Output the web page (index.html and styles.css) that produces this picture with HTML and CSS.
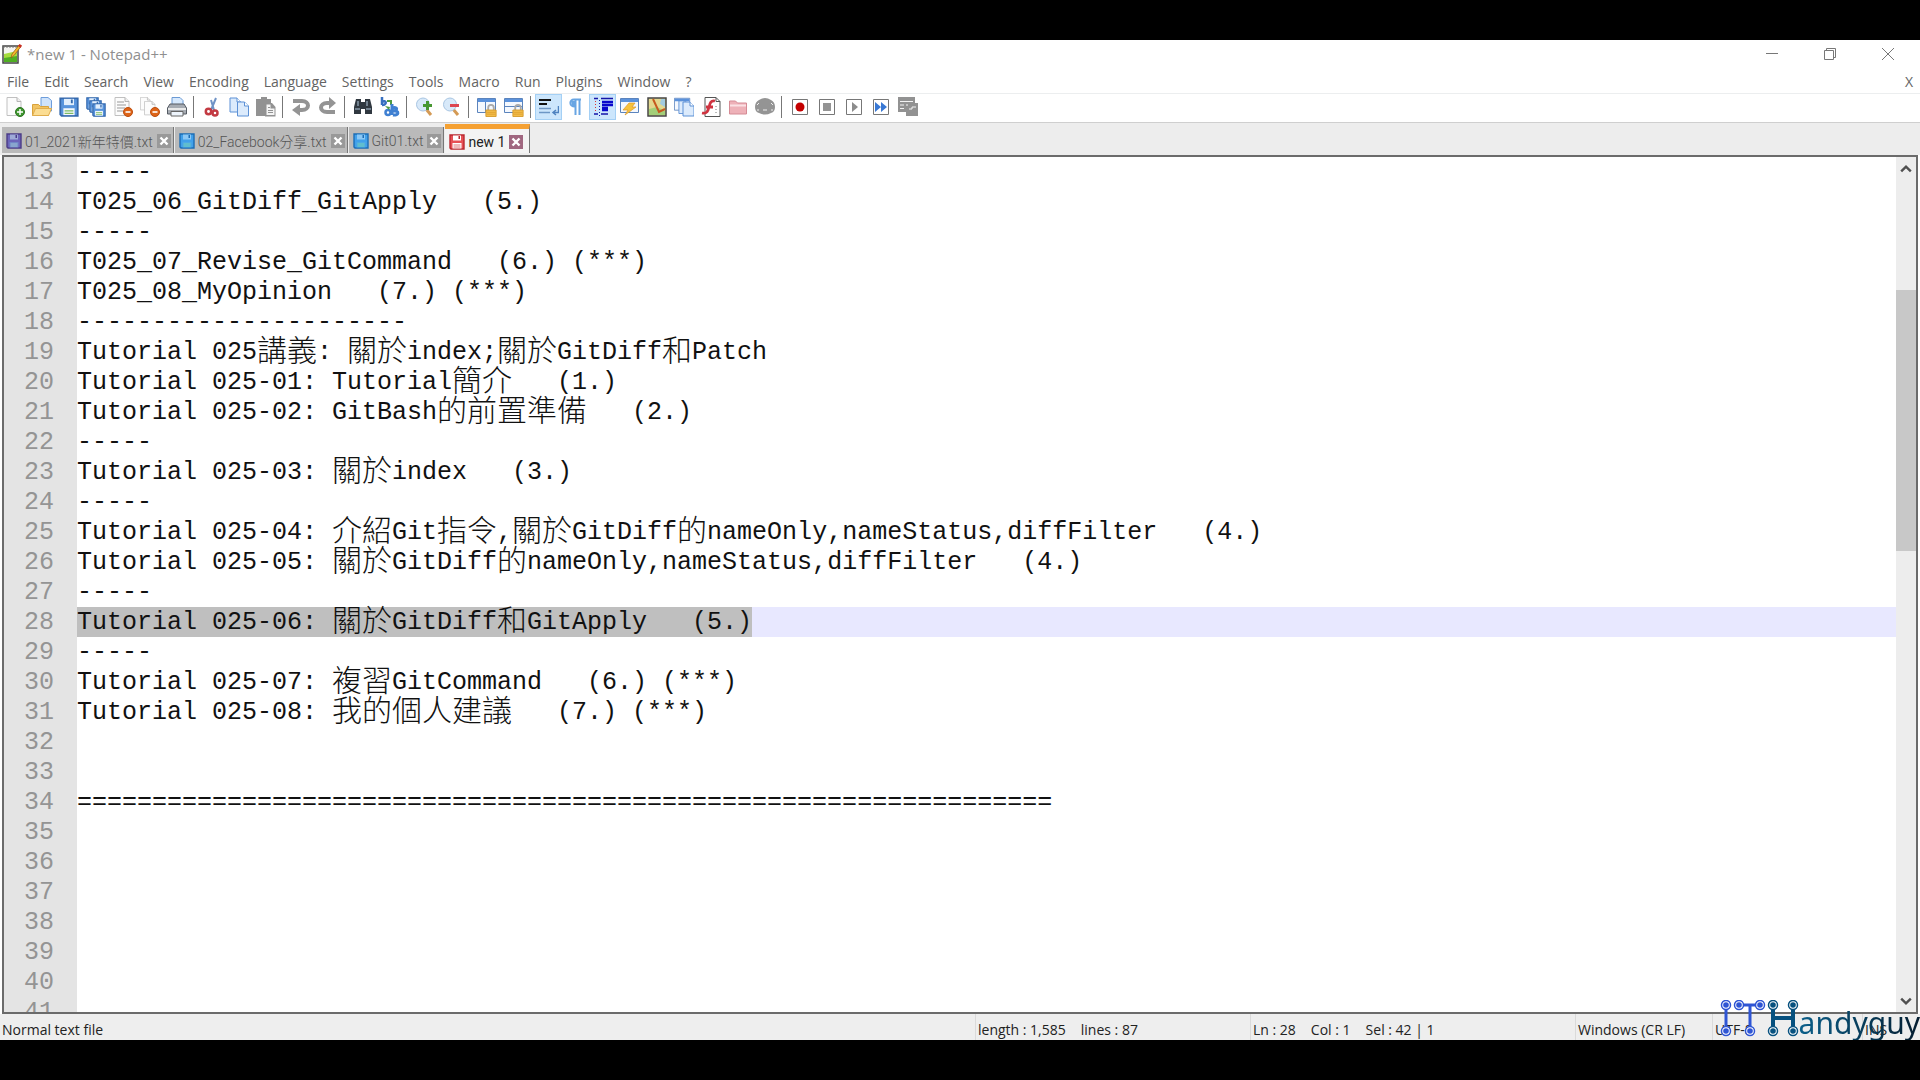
FILE: index.html
```html
<!DOCTYPE html>
<html lang="en">
<head>
<meta charset="UTF-8">
<meta name="viewport" content="width=device-width, initial-scale=1.0">
<title>*new 1 - Notepad++</title>
<link rel="stylesheet" href="styles.css">
</head>
<body>
<!-- shapes used more than once -->
<svg class="defs" aria-hidden="true">
  <symbol id="disk" viewBox="0 0 16 16">
    <path d="M1 1h14v14H2l-1-1z" fill="var(--disk)" stroke="var(--edge)" stroke-width="1.4"/>
    <path d="M4 1.500h8v5H4z" fill="var(--label)"/>
    <path d="M9.500 2h1.500v3H9.500z" fill="var(--edge)"/>
    <path d="M3.500 9h9v5.500h-9z" fill="var(--paper)"/>
    <path d="M4.500 11h7M4.500 13h7" stroke="var(--lines)"/>
  </symbol>
  <symbol id="page" viewBox="0 0 20 20">
    <path d="M2 .5h10l4 4v14H2z" fill="#fcfcfc" stroke="#c0c0c0"/>
    <path d="M12 .5v4h4" fill="#eee" stroke="#b4b4b4"/>
  </symbol>
  <symbol id="bluepage" viewBox="0 0 20 20">
    <path d="M1 1h7l4 4v10H1z" fill="#dcebfc" stroke="#5d91d6"/>
    <path d="M8 1v4h4" fill="#fff" stroke="#5d91d6"/>
  </symbol>
  <symbol id="minus" viewBox="0 0 10 10">
    <circle cx="5" cy="5" r="4.500" fill="#dd6418" stroke="#bd4c0c"/>
    <path d="M2.500 5h5" stroke="#fff" stroke-width="1.600"/>
  </symbol>
  <symbol id="lock" viewBox="0 0 12 14">
    <path d="M3 7V4a3 3 0 0 1 6 0v3" fill="none" stroke="#a9a9a9" stroke-width="2"/>
    <path d="M.5 6.500h11v7H.5z" fill="#f3bd49" stroke="#d69a2b"/>
    <path d="M1 9h10M1 11h10" stroke="#e0a333"/>
  </symbol>
  <symbol id="win" viewBox="0 0 20 20">
    <path d="M.5 1.500h18v14H.5z" fill="#f4f8fe" stroke="#5b84bd"/>
    <path d="M1 2h17v3H1z" fill="#5b92dc"/>
  </symbol>
  <symbol id="cross" viewBox="0 0 14 14">
    <path d="M3.500 3.500l7 7M10.500 3.500l-7 7" stroke="#fff" stroke-width="2.400"/>
  </symbol>
</svg>

<div class="window">
  <header class="titlebar">
    <svg class="app-icon" viewBox="0 0 20 20">
      <path d="M1 2h15v17H1z" fill="#f4f4f0" stroke="#444" stroke-width="1.500"/>
      <path d="M2 10l13-3v11H2z" fill="#a5dc3c"/>
      <path d="M2 14l13-2v6H2z" fill="#4faf22"/>
      <path d="M2 1v3M5 1v3M8 1v3M11 1v3M14 1v3" stroke="#777"/>
      <path d="M9 14l1-4 7-9 2 1.500-7 9z" fill="#f5b52b" stroke="#8d5a18" stroke-width=".7"/>
      <path d="M16 2l1.500-2L20 1.500 18.500 4z" fill="#c82e22"/>
    </svg>
    <h1>*new 1 - Notepad++</h1>
    <div class="controls">
      <button aria-label="Minimize"><svg viewBox="0 0 12 12"><path d="M0 5.500h12"/></svg></button>
      <button aria-label="Restore"><svg viewBox="0 0 12 12"><path d="M.5 2.500h9v9h-9zM2.500 2.500v-2h9v9h-2"/></svg></button>
      <button aria-label="Close"><svg viewBox="0 0 12 12"><path d="M0 0l12 12M12 0L0 12"/></svg></button>
    </div>
  </header>

  <nav class="menu">
    <button>File</button>
    <button>Edit</button>
    <button>Search</button>
    <button>View</button>
    <button>Encoding</button>
    <button>Language</button>
    <button>Settings</button>
    <button>Tools</button>
    <button>Macro</button>
    <button>Run</button>
    <button>Plugins</button>
    <button>Window</button>
    <button>?</button>
    <button class="close-doc">X</button>
  </nav>

  <div class="toolbar">
    <button aria-label="New"><svg viewBox="0 0 20 20"><use href="#page" width="20" height="20"/><circle cx="15" cy="15" r="4.500" fill="#3f962f" stroke="#2b7420"/><path d="M15 12v6M12 15h6" stroke="#fff" stroke-width="1.500"/></svg></button>
    <button aria-label="Open"><svg viewBox="0 0 20 20"><path d="M9 .5h7l3.500 3V14H9z" fill="#cfe3fb" stroke="#6d9ddb"/><path d="M.5 18.500v-11h6l2 2h8v9z" fill="#f2c463" stroke="#d9a23c"/><path d="M.5 18.500l3-7h16l-3 7z" fill="#fbdd93" stroke="#e0ad4c"/></svg></button>
    <button aria-label="Save"><svg class="blue" viewBox="0 0 20 20"><use href="#disk" width="20" height="20"/></svg></button>
    <button aria-label="Save all"><svg class="blue" viewBox="0 0 20 20"><use href="#disk" x="0" y="0" width="13" height="13"/><use href="#disk" x="3" y="3" width="13" height="13"/><use href="#disk" x="6" y="6" width="14" height="14"/></svg></button>
    <button aria-label="Close file"><svg viewBox="0 0 20 20"><use href="#page" width="20" height="20"/><path d="M4 5h7M4 8h9M4 11h8M4 14h6" stroke="#999"/><use href="#minus" x="10" y="10" width="10" height="10"/></svg></button>
    <button aria-label="Close all"><svg viewBox="0 0 20 20"><use href="#page" x="-1" width="14" height="14"/><use href="#page" x="3" y="4" width="15" height="15"/><use href="#minus" x="10" y="10" width="10" height="10"/></svg></button>
    <button aria-label="Print"><svg viewBox="0 0 20 20"><path d="M5 .5h8l3 3V9H5z" fill="#d7e9fd" stroke="#6b9ad4"/><path d="M3 7h14l2.500 4v6H.5v-6z" fill="#a6abb2" stroke="#555b63"/><path d="M1 12h18" stroke="#e9e9e9" stroke-width="2"/><path d="M4 14.500h12v4.500H4z" fill="#eef5fd" stroke="#666"/></svg></button>
    <span class="sep"></span>
    <button aria-label="Cut"><svg viewBox="0 0 20 20"><path d="M14 1L9 13M9 3l3 10" stroke="#6f93c6" stroke-width="2"/><g fill="none" stroke="#c33a42" stroke-width="2.500"><circle cx="6.500" cy="14.500" r="2.700"/><circle cx="13" cy="16" r="2.500"/></g></svg></button>
    <button aria-label="Copy"><svg viewBox="0 0 20 20"><use href="#bluepage" width="20" height="20"/><use href="#bluepage" x="7.500" y="4" width="20" height="20"/></svg></button>
    <button aria-label="Paste"><svg viewBox="0 0 20 20"><path d="M0 2h5V0h6v2h4v4H9v13H0z" fill="#929292"/><path d="M9 6h7l3.500 4v9.500H9z" fill="#929292"/><path d="M10.500 7.500h4v4h4V18h-8z" fill="#f4f4f4"/><path d="M12 10.500h2M12 13.500h5M12 15.500h5" stroke="#929292"/></svg></button>
    <span class="sep"></span>
    <button aria-label="Undo"><svg viewBox="0 0 20 20"><path d="M2 4h9c8 0 8 9 0 9H8" fill="none" stroke="#949494" stroke-width="4"/><path d="M1 13l8-6v12z" fill="#949494"/></svg></button>
    <button aria-label="Redo"><svg viewBox="0 0 20 20"><path d="M12 6H9C1 6 1 15 9 15h8" fill="none" stroke="#949494" stroke-width="4"/><path d="M18 6l-7-6v12z" fill="#949494"/></svg></button>
    <span class="sep"></span>
    <button aria-label="Find"><svg viewBox="0 0 20 20"><path d="M3 2h5v3h4V2h5l2 8v7h-7v-5H8v5H1v-7z" fill="#303840"/><path d="M5 4v5M14 4v5M2 12h5M13 12h5" stroke="#8798a8" stroke-width="1.500"/></svg></button>
    <button aria-label="Replace"><svg viewBox="0 0 20 20"><path d="M2 0v8M2 5c4-3 6 3 0 3" fill="none" stroke="#376fc0" stroke-width="2.500"/><path d="M7 4h4v4" fill="none" stroke="#4e9b43" stroke-width="2"/><path d="M12 7v11M12 11c6-2 6 3 1 3 7-1 6 5 0 4" fill="none" stroke="#3f80d2" stroke-width="3"/><circle cx="8" cy="15.500" r="2.500" fill="none" stroke="#3f80d2" stroke-width="2.500"/><path d="M5 9l5 1-1 3z" fill="#4e9b43"/></svg></button>
    <span class="sep"></span>
    <button aria-label="Zoom in"><svg viewBox="0 0 20 20"><path d="M11 12l5 6" stroke="#d49a55" stroke-width="3"/><circle cx="8" cy="7.500" r="6.500" fill="#d8e9f9" stroke="#a8c5e2"/><path d="M12.500 4v9M8 8.500h9" stroke="#479832" stroke-width="3"/></svg></button>
    <button aria-label="Zoom out"><svg viewBox="0 0 20 20"><path d="M11 12l5 6" stroke="#d49a55" stroke-width="3"/><circle cx="8" cy="7.500" r="6.500" fill="#d8e9f9" stroke="#a8c5e2"/><path d="M8 8.500h9" stroke="#dc4650" stroke-width="3"/></svg></button>
    <span class="sep"></span>
    <button aria-label="Sync vertical"><svg viewBox="0 0 20 20"><use href="#win" width="20" height="20"/><path d="M8.500 5v10" stroke="#5b84bd"/><use href="#lock" x="8" y="7" width="12" height="13"/></svg></button>
    <button aria-label="Sync horizontal"><svg viewBox="0 0 20 20"><use href="#win" width="20" height="20"/><path d="M1 9.500h17" stroke="#5b84bd"/><use href="#lock" x="8" y="7" width="12" height="13"/></svg></button>
    <span class="sep"></span>
    <button class="on" aria-label="Word wrap"><svg viewBox="0 0 20 20"><path d="M0 3h12M0 7h8" stroke="#111" stroke-width="2"/><path d="M0 11.500h12M0 15.500h11" stroke="#6d97c6" stroke-width="1.500"/><path d="M19.500 9v6.500H14M17 13l-3 2.500 3 2.500" fill="none" stroke="#4e82c0" stroke-width="1.500"/></svg></button>
    <button aria-label="Show all characters"><svg viewBox="0 0 20 20"><path d="M15 2.500H8c-5 0-5 7 1 7M9.500 3v15M13.500 3v15" fill="none" stroke="#68a5e3" stroke-width="2"/><path d="M5 4h5v5H6z" fill="#68a5e3"/></svg></button>
    <button class="on" aria-label="Indent guide"><svg viewBox="0 0 20 20"><path d="M1 1.500h4M8 1.500h12M8 17h7M1 17h4" stroke="#1515a8" stroke-width="1.500"/><path d="M9 5h11M9 8h11M9 11h6M9 13h6" stroke="#0808cc" stroke-width="2.500"/><path d="M2.500 4v12" stroke="#d33" stroke-dasharray="1 2"/><path d="M6.500 3v17" stroke="#1515a8" stroke-dasharray="1 2"/></svg></button>
    <button aria-label="User language"><svg viewBox="0 0 20 20"><use href="#win" width="20" height="20"/><path d="M9 6h6l-3 4h4L5 18l3-5H3z" fill="#f7c23c" stroke="#dd9a2a" stroke-width=".7"/></svg></button>
    <button aria-label="Document map"><svg viewBox="0 0 20 20"><path d="M1 1h18v18H1z" fill="#e3d88f" stroke="#464646" stroke-width="1.500"/><path d="M2 12l8-2 8 4v4H2z" fill="#a4cf79"/><path d="M14 2h4v8l-5-3z" fill="#a2cbe0"/><path d="M6 2l6 13 6-3" fill="none" stroke="#c6591f" stroke-width="2"/></svg></button>
    <button aria-label="Document list"><svg viewBox="0 0 20 20"><use href="#win" width="17" height="17"/><use href="#bluepage" x="4" y="3" width="18" height="18"/><use href="#bluepage" x="8" y="4" width="20" height="20"/></svg></button>
    <button aria-label="Function list"><svg viewBox="0 0 20 20"><path d="M4 .5h11l4 4v15H4z" fill="#fff" stroke="#555"/><path d="M15 .5v4h4" fill="none" stroke="#555"/><path d="M14 4c-4-1-5 2-6 6s-2 7-7 6M5 10h7" fill="none" stroke="#cf3340" stroke-width="2.800"/><path d="M15 9v8" stroke="#777" stroke-dasharray="1 2"/></svg></button>
    <button aria-label="Folder as workspace"><svg viewBox="0 0 20 20"><path d="M1.500 17V4h6l2 2h9v11z" fill="#eeb1b8" stroke="#d58b95"/><path d="M2 8.500h16" stroke="#fbe1e4" stroke-width="2"/></svg></button>
    <button aria-label="Monitoring"><svg viewBox="0 0 20 20"><path d="M4 3q6-4 12 0 4 2 4 7t-4 6q-6 3-12 0-4-1-4-6t4-7z" fill="#949494"/><path d="M2 8l2-2M16 6l2 2M3 12v2M17 12v2M8 13h4" stroke="#eee"/></svg></button>
    <span class="sep"></span>
    <button aria-label="Record macro"><svg viewBox="0 0 20 20"><path class="frame" d="M2.500 2.500h15v15h-15z"/><circle cx="10" cy="10" r="4.500" fill="#c40000"/></svg></button>
    <button aria-label="Stop macro"><svg viewBox="0 0 20 20"><path class="frame" d="M2.500 2.500h15v15h-15z"/><path d="M6 6h8v8H6z" fill="#949494"/></svg></button>
    <button aria-label="Play macro"><svg viewBox="0 0 20 20"><path class="frame" d="M2.500 2.500h15v15h-15z"/><path d="M8 5l6 5-6 5z" fill="#8c8c8c"/></svg></button>
    <button aria-label="Play macro many times"><svg viewBox="0 0 20 20"><path class="frame" d="M2.500 2.500h15v15h-15z"/><path d="M4 5l6 5-6 5zM10 5l6 5-6 5z" fill="#3978d4"/></svg></button>
    <button aria-label="Save macro"><svg viewBox="0 0 20 20"><path d="M0 0h17v6h3v13H8v-4H0z" fill="#929292"/><path d="M2 4.500h13M2 8h4M8 8h2M2 11.500h4M11 12h3v-2h4" fill="none" stroke="#f3f3f3"/></svg></button>
  </div>

  <div class="tabs">
    <div class="tab violet"><button class="name"><svg><use href="#disk"/></svg>01_2021新年特價.txt</button><button class="x" aria-label="Close tab"><svg><use href="#cross"/></svg></button></div>
    <div class="tab sky"><button class="name"><svg><use href="#disk"/></svg>02_Facebook分享.txt</button><button class="x" aria-label="Close tab"><svg><use href="#cross"/></svg></button></div>
    <div class="tab sky"><button class="name"><svg><use href="#disk"/></svg>Git01.txt</button><button class="x" aria-label="Close tab"><svg><use href="#cross"/></svg></button></div>
    <div class="tab red active"><button class="name"><svg><use href="#disk"/></svg>new 1</button><button class="x" aria-label="Close tab"><svg><use href="#cross"/></svg></button></div>
  </div>

  <main class="editor">
    <div class="lines">
      <div class="line"><span class="num">13</span><code>-----</code></div>
      <div class="line"><span class="num">14</span><code>T025_06_GitDiff_GitApply   (5.)</code></div>
      <div class="line"><span class="num">15</span><code>-----</code></div>
      <div class="line"><span class="num">16</span><code>T025_07_Revise_GitCommand   (6.) (***)</code></div>
      <div class="line"><span class="num">17</span><code>T025_08_MyOpinion   (7.) (***)</code></div>
      <div class="line"><span class="num">18</span><code>----------------------</code></div>
      <div class="line"><span class="num">19</span><code>Tutorial 025<b>講義</b>: <b>關於</b>index;<b>關於</b>GitDiff<b>和</b>Patch</code></div>
      <div class="line"><span class="num">20</span><code>Tutorial 025-01: Tutorial<b>簡介</b>   (1.)</code></div>
      <div class="line"><span class="num">21</span><code>Tutorial 025-02: GitBash<b>的前置準備</b>   (2.)</code></div>
      <div class="line"><span class="num">22</span><code>-----</code></div>
      <div class="line"><span class="num">23</span><code>Tutorial 025-03: <b>關於</b>index   (3.)</code></div>
      <div class="line"><span class="num">24</span><code>-----</code></div>
      <div class="line"><span class="num">25</span><code>Tutorial 025-04: <b>介紹</b>Git<b>指令</b>,<b>關於</b>GitDiff<b>的</b>nameOnly,nameStatus,diffFilter   (4.)</code></div>
      <div class="line"><span class="num">26</span><code>Tutorial 025-05: <b>關於</b>GitDiff<b>的</b>nameOnly,nameStatus,diffFilter   (4.)</code></div>
      <div class="line"><span class="num">27</span><code>-----</code></div>
      <div class="line current"><span class="num">28</span><code class="selected">Tutorial 025-06: <b>關於</b>GitDiff<b>和</b>GitApply   (5.)</code></div>
      <div class="line"><span class="num">29</span><code>-----</code></div>
      <div class="line"><span class="num">30</span><code>Tutorial 025-07: <b>複習</b>GitCommand   (6.) (***)</code></div>
      <div class="line"><span class="num">31</span><code>Tutorial 025-08: <b>我的個人建議</b>   (7.) (***)</code></div>
      <div class="line"><span class="num">32</span></div>
      <div class="line"><span class="num">33</span></div>
      <div class="line"><span class="num">34</span><code>=================================================================</code></div>
      <div class="line"><span class="num">35</span></div>
      <div class="line"><span class="num">36</span></div>
      <div class="line"><span class="num">37</span></div>
      <div class="line"><span class="num">38</span></div>
      <div class="line"><span class="num">39</span></div>
      <div class="line"><span class="num">40</span></div>
      <div class="line"><span class="num">41</span></div>
    </div>
    <div class="scrollbar">
      <button aria-label="Scroll up"><svg viewBox="0 0 10 8"><path d="M1 6l4-4 4 4"/></svg></button>
      <div class="track"><div class="thumb"></div></div>
      <button aria-label="Scroll down"><svg viewBox="0 0 10 8"><path d="M1 2l4 4 4-4"/></svg></button>
    </div>
  </main>

  <footer class="status">
    <span class="type">Normal text file</span>
    <span class="length"><span>length : 1,585</span><span>lines : 87</span></span>
    <span class="pos"><span>Ln : 28</span><span>Col : 1</span><span>Sel : 42 | 1</span></span>
    <span class="eol">Windows (CR LF)</span>
    <span class="enc">UTF-8</span>
    <span class="ins">INS</span>
  </footer>

  <div class="brand">
    <svg viewBox="0 3 80 40" aria-label="ITH">
      <g fill="none" stroke="#2f55d4" stroke-width="3"><path d="M7 8v26M21 8h20M31 8v26"/></g>
      <g fill="none" stroke="#07517f" stroke-width="4"><path d="M54 8v26M74 8v26M54 21h20"/></g>
      <g class="nodes" stroke="#2f55d4"><circle cx="7" cy="8" r="4.500"/><circle cx="20" cy="8" r="4.500"/><circle cx="41" cy="8" r="4.500"/><circle cx="7" cy="34" r="4.500"/><circle cx="31" cy="34" r="4.500"/></g>
      <g class="nodes" stroke="#07517f"><circle cx="54" cy="8" r="4.500"/><circle cx="74" cy="8" r="4.500"/><circle cx="54" cy="34" r="4.500"/><circle cx="74" cy="34" r="4.500"/></g>
      <g fill="#2f55d4"><circle cx="7" cy="8" r="2.800"/><circle cx="20" cy="8" r="2.800"/><circle cx="41" cy="8" r="2.800"/><circle cx="7" cy="34" r="2.800"/><circle cx="31" cy="34" r="2.800"/></g>
      <g fill="#07517f"><circle cx="54" cy="8" r="2.800"/><circle cx="74" cy="8" r="2.800"/><circle cx="54" cy="34" r="2.800"/><circle cx="74" cy="34" r="2.800"/></g>
    </svg>
    <span>andyguy</span>
  </div>
</div>
</body>
</html>
```
FILE: styles.css
```css
* {
  box-sizing: border-box;
}
body {
  margin: 0;
  padding: 40px 0;
  height: 100vh;
  background-color: #000;
  font-family: "Open Sans", "Noto Sans CJK TC", sans-serif;
  font-size: 14px;
}
button {
  margin: 0;
  padding: 0;
  border: none;
  background: none;
  color: inherit;
  font: inherit;
}
svg {
  display: block;
}
.defs {
  position: absolute;
  width: 0;
  height: 0;
}
.window {
  position: relative;
  display: flex;
  flex-direction: column;
  height: 100%;
  background-color: #fff;
}

/* Title and menu */
.titlebar {
  display: flex;
  align-items: center;
  height: 29px;
  padding: 0 3px 2px 2px;
  color: #8f8f8f;
}
.app-icon {
  width: 20px;
  height: 20px;
}
h1 {
  margin: 0 0 0 5px;
  font-size: 15px;
  font-weight: normal;
}
.controls {
  display: flex;
  margin-left: auto;
}
.controls button {
  width: 58px;
  height: 26px;
}
.controls svg {
  width: 12px;
  height: 12px;
  margin: auto;
  fill: none;
  stroke: #777;
}
.menu {
  display: flex;
  align-items: center;
  gap: 15px;
  height: 25px;
  padding: 0 7px;
  border-bottom: 1px solid #eceeef;
  color: #636363;
}
.close-doc {
  margin-left: auto;
}

/* Toolbar */
.toolbar {
  display: flex;
  align-items: center;
  height: 29px;
  padding: 0 0 2px 1px;
  border-bottom: 1px solid #cfcfcf;
}
.toolbar button {
  width: 27px;
  height: 26px;
}
.toolbar button.on {
  background-color: #cce6fc;
  border: 1px solid #a4d0f5;
}
.toolbar svg {
  width: 20px;
  height: 20px;
  margin: auto;
}
.sep {
  width: 2px;
  height: 22px;
  margin: 0 3px;
  border-left: 1px solid #777;
}
.frame {
  fill: #fff;
  stroke: #777;
}

/* Floppy colours */
.blue, .sky {
  --disk: #5793dc;
  --edge: #3569ad;
  --label: #e1eefc;
  --paper: #f4f8fc;
  --lines: #7dbb62;
}
.sky {
  --disk: #41a0ea;
  --edge: #1d6db5;
  --label: #8cc8f5;
  --paper: #4da9e5;
  --lines: #75d1b7;
}
.violet {
  --disk: #6c64ba;
  --edge: #4b3c87;
  --label: #9eabd7;
  --paper: #7286c7;
  --lines: #9fc5d5;
}
.red {
  --disk: #e65055;
  --edge: #b9282f;
  --label: #fff;
  --paper: #fff;
  --lines: #dd7778;
}

/* Tabs */
.tabs {
  display: flex;
  align-items: flex-end;
  height: 32px;
  padding: 0 0 2px 2px;
  background-color: #ededed;
  font-family: Roboto, "Noto Sans CJK TC", sans-serif;
}
.tab {
  display: flex;
  align-items: center;
  gap: 4px;
  height: 26px;
  padding: 2px 2px 0 4px;
  margin-right: 1px;
  background-color: #bababa;
  border-right: 1px solid #777;
  color: #777;
  font-size: 14px;
}
.name {
  display: flex;
  align-items: center;
  gap: 3px;
}
.tab:not(.active) .name {
  font-weight: 300;
  color: #555;
}
.name svg {
  width: 16px;
  height: 16px;
}
.x {
  width: 14px;
  height: 14px;
  background-color: #999;
}
.x svg {
  width: 14px;
  height: 14px;
}
.tab.active {
  height: 29px;
  padding-right: 6px;
  background-color: #f3f3f3;
  border-top: 5px solid #f5a133;
  color: #222;
}
.active .x {
  background-color: #a06780;
}

/* Text area */
.editor {
  flex: 1;
  display: flex;
  min-height: 0;
  margin: 0 2px;
  border: 2px solid #6b6b6b;
}
.lines {
  flex: 1;
  min-width: 0;
  overflow: hidden;
  font-family: "Liberation Mono", "Noto Sans CJK TC", monospace;
  font-size: 25px;
  line-height: 32px;
  color: #111;
}
.line {
  display: flex;
  height: 30px;
}
.num {
  flex: none;
  width: 73px;
  padding-right: 23px;
  background-color: #e4e4e4;
  color: #949494;
  text-align: right;
}
code {
  font-family: inherit;
  white-space: pre;
}
/* full-width characters take two columns */
code b {
  font-size: 30px;
  font-weight: 300;
  line-height: 32px;
  vertical-align: top;
}
.current {
  background-color: #e8e8ff;
}
.selected {
  background-color: #bfbfbf;
}
.scrollbar {
  display: flex;
  flex-direction: column;
  width: 20px;
  background-color: #ededed;
}
.scrollbar button {
  height: 23px;
}
.scrollbar svg {
  width: 12px;
  height: 10px;
  margin: auto;
  fill: none;
  stroke: #505050;
  stroke-width: 2;
}
.track {
  flex: 1;
  padding-top: 110px;
}
.thumb {
  height: 261px;
  background-color: #c8c8c8;
}

/* Status bar */
.status {
  display: flex;
  height: 26px;
  padding-left: 2px;
  background-color: #eee;
  line-height: 32px;
  color: #222;
}
.status > span {
  display: flex;
  gap: 15px;
  height: 26px;
  padding-left: 2px;
  white-space: nowrap;
  border-left: 1px solid #dadada;
}
.status .type {
  flex: 1;
  padding-left: 0;
  border-left: none;
}
.status .length {
  width: 275px;
}
.status .pos {
  width: 325px;
}
.status .eol {
  width: 137px;
}
.status .enc {
  width: 150px;
}
.status .ins {
  width: 58px;
}

/* Channel logo over the corner */
.brand {
  position: absolute;
  right: 0;
  bottom: 0;
  display: flex;
  font-family: "Noto Sans", sans-serif;
  font-size: 30px;
  line-height: 34px;
}
.brand svg {
  width: 80px;
  height: 40px;
}
.brand span {
  align-self: flex-end;
  background: linear-gradient(90deg, #0b5f8a, #041d30);
  background-clip: text;
  -webkit-background-clip: text;
  color: transparent;
}
.nodes {
  fill: #fff;
  stroke-width: 1.500;
}
```
